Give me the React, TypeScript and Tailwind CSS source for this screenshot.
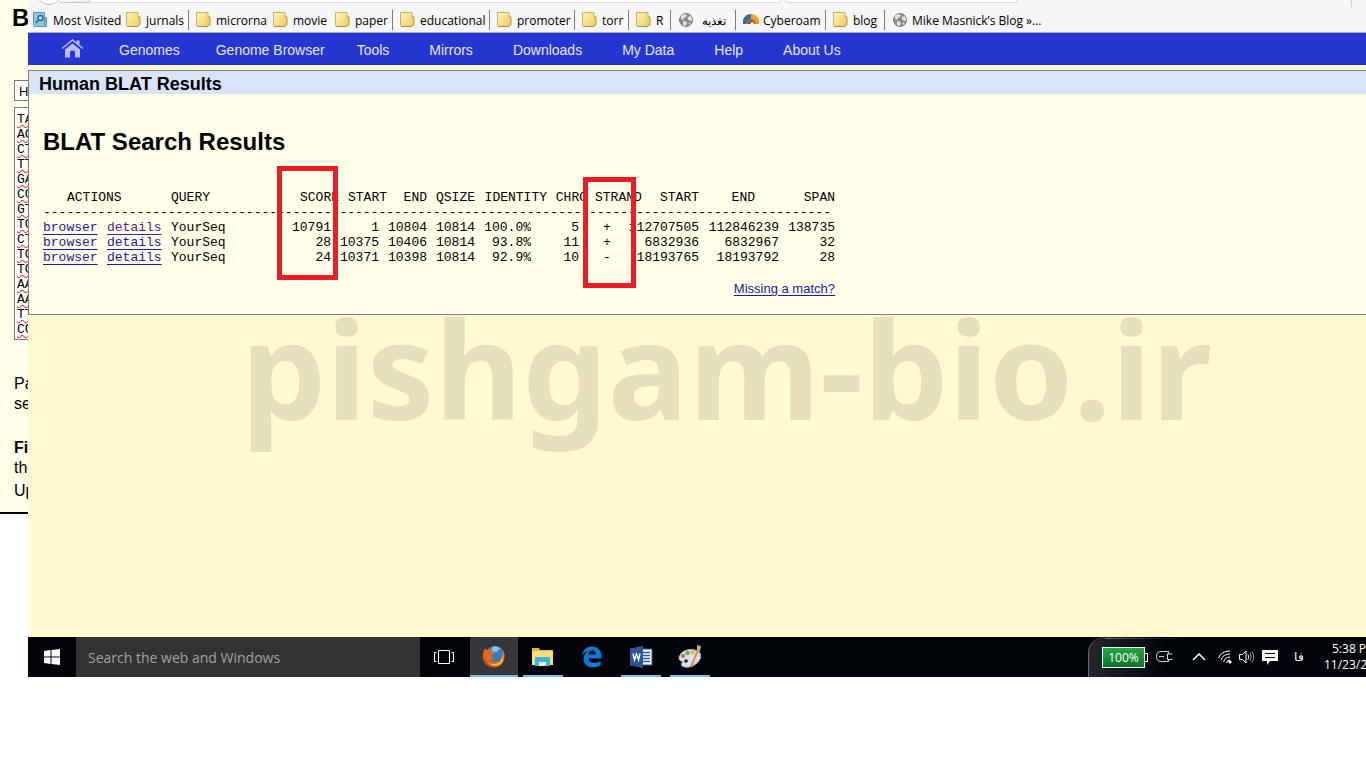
import React from 'react';

const FolderIcon: React.FC = () => (
  <svg className="w-4 h-4 shrink-0" viewBox="0 0 16 16">
    <path d="M11 4.500h2q1 0 1 1V12.500q0 1-1 1H11z" fill="#e6cc68" stroke="#b99b3c" />
    <path d="M.500.500h11.500v14H1.500l-1-1z" fill="url(#folder)" stroke="#cfb255" />
    <path d="M12 5.500v7" stroke="#f7e594" />
    <path d="M1 14.500h11" stroke="#b3923f" />
  </svg>
);

const GlobeIcon: React.FC = () => (
  <svg className="w-4 h-4 shrink-0" viewBox="0 0 16 16">
    <circle cx="8" cy="8" r="6.500" fill="#8a8a8a" stroke="#7f7f7f" />
    <path d="M3 4l3-2 3 1-1 2-2 1-1 2-2-1zM10 5l3-1 1.500 4-2 1-2-1-1-2zM5 9l3 .5 1 2-2 3-2-2zM10.500 11l2-1-1 3z" fill="#e3e3e3" />
  </svg>
);

const SearchFolderIcon: React.FC = () => (
  <svg className="w-4 h-4 shrink-0" viewBox="0 0 16 16">
    <path d="M11 5.500h2.500v9h-2.500z" fill="#7db7d8" stroke="#5b9cc0" />
    <path d="M.5.5h11v14H1.500l-1-1z" fill="#93c5e3" stroke="#5b9cc0" />
    <circle cx="7.500" cy="6" r="2.500" fill="#c3e2f4" stroke="#2d6a90" strokeWidth="1.500" />
    <path d="M5.500 8L3 11" stroke="#2d6a90" strokeWidth="1.800" />
  </svg>
);

const CyberoamIcon: React.FC = () => (
  <svg className="w-4 h-4 shrink-0" viewBox="0 0 16 16">
    <path d="M0 12A8 8 0 018 2v10z" fill="#2f6fae" />
    <path d="M8 2a8 8 0 018 10H8z" fill="#f0a228" />
    <path d="M3 12a5 5 0 0110 0z" fill="#d9641f" />
    <path d="M5 12a3 3 0 016 0z" fill="#3d4f8f" />
    <path d="M7 12a2 2 0 014 0z" fill="#f5f5f5" />
  </svg>
);

const bookmarks = [
  { label: 'Most Visited', icon: <SearchFolderIcon />, box: 'w-[93px] gap-1' },
  { label: 'jurnals', icon: <FolderIcon />, box: 'w-[63px] gap-1 border-r' },
  { label: 'microrna', icon: <FolderIcon />, box: 'w-[77px] gap-1 ml-[7px]' },
  { label: 'movie', icon: <FolderIcon />, box: 'w-[62px] gap-1' },
  { label: 'paper', icon: <FolderIcon />, box: 'w-[58px] gap-1 border-r' },
  { label: 'educational', icon: <FolderIcon />, box: 'w-[90px] gap-1 ml-[7px] border-r' },
  { label: 'promoter', icon: <FolderIcon />, box: 'w-[78px] gap-1 ml-[7px] border-r' },
  { label: 'torr', icon: <FolderIcon />, box: 'w-[47px] gap-1 ml-[7px] border-r' },
  { label: 'R', icon: <FolderIcon />, box: 'w-[35px] gap-1 ml-[7px] border-r' },
  { label: 'تغذیه', icon: <GlobeIcon />, box: 'w-[58px] gap-2 ml-[7px] border-r' },
  { label: 'Cyberoam', icon: <CyberoamIcon />, box: 'w-[83px] gap-1 ml-[7px] border-r' },
  { label: 'blog', icon: <FolderIcon />, box: 'w-[52px] gap-1 ml-[7px] border-r' },
  { label: 'Mike Masnick’s Blog »…', icon: <GlobeIcon />, box: 'gap-1 ml-[7px]' },
];

const menu = [
  { label: 'Genomes', gap: 'mr-9' },
  { label: 'Genome Browser', gap: 'mr-8' },
  { label: 'Tools', gap: 'mr-10' },
  { label: 'Mirrors', gap: 'mr-10' },
  { label: 'Downloads', gap: 'mr-10' },
  { label: 'My Data', gap: 'mr-10' },
  { label: 'Help', gap: 'mr-10' },
  { label: 'About Us', gap: '' },
];

const sequence = ['TA', 'AG', 'CT', 'TT', 'GA', 'CC', 'GT', 'TG', 'CT', 'TG', 'TG', 'AA', 'AA', 'TT', 'CC'];

const hits = [
  { score: '10791', start: '1', end: '10804', identity: '100.0%', chro: '5', strand: '+', tStart: '112707505', tEnd: '112846239', span: '138735', visited: true },
  { score: '28', start: '10375', end: '10406', identity: '93.8%', chro: '11', strand: '+', tStart: '6832936', tEnd: '6832967', span: '32', visited: false },
  { score: '24', start: '10371', end: '10398', identity: '92.9%', chro: '10', strand: '-', tStart: '18193765', tEnd: '18193792', span: '28', visited: false },
];

const BackPage: React.FC = () => (
  <aside className="w-7 h-[514px] shrink-0 overflow-hidden whitespace-nowrap bg-[#fffee8] border-b-2 border-black text-black">
    <h2 className="pl-3 pt-1 text-2xl leading-7 font-bold">BL</h2>
    <div className="ml-[14px] mt-12 w-20 h-[21px] border border-[#7a7a7a] bg-white pl-1 text-[13px] leading-[22px]">Hu</div>
    <div className="ml-[14px] mt-[6px] w-20 h-[233px] border border-[#7a7a7a] bg-white pl-[2px] pt-1 font-['Liberation_Mono',monospace] text-[13px] leading-[15px]">
      {sequence.map((line, index) => (
        <div key={index} className="underline decoration-wavy decoration-[#ff0000] decoration-1 underline-offset-1 [text-decoration-skip-ink:none]">{line}</div>
      ))}
    </div>
    <div className="pl-[14px] pt-[34px] text-base leading-5">
      <p>Pa</p>
      <p>se</p>
      <p className="pt-6 font-bold">Fil</p>
      <p>the</p>
      <p className="pt-[3px]">Up</p>
    </div>
  </aside>
);

const BookmarkBar: React.FC = () => (
  <div className="relative h-[33px] bg-[#f5f5f5] border-b border-[#b5b5b5] pt-[10px] overflow-hidden">
    <svg width="0" height="0" className="absolute">
      <linearGradient id="folder" x1="0" y1="0" x2="1" y2="1">
        <stop offset="0" stopColor="#fff6bd" />
        <stop offset="1" stopColor="#ebcf65" />
      </linearGradient>
    </svg>
    <svg className="absolute left-0 top-0 w-full h-[9px]">
      <path d="M32 2.500H61.500V0" fill="#eeeeee" stroke="#c6c6c6" />
      <path d="M62 0h690v2H62zM758 0h230v2H758z" fill="#ffffff" />
      <path d="M62 2.500h690V0M758.500 0v2.500H988.500V0" fill="none" stroke="#dedede" />
      <circle cx="21" cy="-9" r="13.500" fill="#fafafa" stroke="#c2c2c2" />
      <path d="M1323.500 0v7" stroke="#cfcfcf" />
    </svg>
    <nav className="flex pl-[5px] h-5 whitespace-nowrap font-['Open_Sans','Noto_Sans',sans-serif] text-[12px] leading-5 text-black">
      {bookmarks.map((bookmark) => (
        <a key={bookmark.label} href="#" className={`flex shrink-0 items-center border-[#7d7d7d] ${bookmark.box}`}>
          {bookmark.icon}
          <span className="pt-[2px]">{bookmark.label}</span>
        </a>
      ))}
    </nav>
  </div>
);

const MenuBar: React.FC = () => (
  <nav className="flex h-8 items-center bg-[#2636d0] pl-[31px] pt-[2px] text-[14px] text-[#e4e8ff]">
    <a href="#" aria-label="Home" className="mr-8 px-[2px] pb-[2px]">
      <svg className="w-6 h-5" viewBox="0 0 24 20">
        <path d="M1 9.500L11.500 1 22 9.500" fill="none" stroke="#b9c0f5" strokeWidth="1.500" />
        <path d="M15.500 1.500h3V6l-3-2.500z" fill="#b9c0f5" />
        <path d="M4 10.500L11.500 4.500l7.500 6v8h-5V13q0-1.500-2.500-1.500T9 13v5.500H4z" fill="#b9c0f5" />
      </svg>
    </a>
    {menu.map((item) => (
      <a key={item.label} href="#" className={item.gap}>{item.label}</a>
    ))}
  </nav>
);

const Results: React.FC = () => (
  <div className="relative w-[792px] mt-8">
    <table className="table-fixed w-full font-['Liberation_Mono',monospace] text-[13px] leading-[15px] text-right whitespace-nowrap text-black">
      <colgroup>
        <col className="w-[128px]" />
        <col className="w-[104px]" />
        <col className="w-[64px]" />
        <col className="w-[48px]" />
        <col className="w-[48px]" />
        <col className="w-[48px]" />
        <col className="w-[72px]" />
        <col className="w-[40px]" />
        <col className="w-[32px]" />
        <col className="w-[80px]" />
        <col className="w-[80px]" />
        <col className="w-[48px]" />
      </colgroup>
      <thead>
        <tr className="[&>th]:font-normal">
          <th className="pl-6 text-left">ACTIONS</th>
          <th className="text-left">QUERY</th>
          <th>SCORE</th>
          <th>START</th>
          <th className="pr-2">END</th>
          <th className="pr-2">QSIZE</th>
          <th className="pr-2">IDENTITY</th>
          <th className="pr-2">CHRO</th>
          <th className="text-left">STRAND</th>
          <th className="pr-2">START</th>
          <th className="pr-8">END</th>
          <th>SPAN</th>
        </tr>
        <tr>
          <td colSpan={12} className="text-left">{'-'.repeat(101)}</td>
        </tr>
      </thead>
      <tbody>
        {hits.map((hit) => (
          <tr key={hit.score}>
            <td className="text-left text-[#1a1a9c]">
              <a href="#" className="inline-block w-16 underline underline-offset-3">browser</a>
              <a href="#" className={hit.visited ? 'underline underline-offset-3 text-[#551a8b]' : 'underline underline-offset-3'}>details</a>
            </td>
            <td className="text-left">YourSeq</td>
            <td className="pr-2">{hit.score}</td>
            <td className="pr-2">{hit.start}</td>
            <td className="pr-2">{hit.end}</td>
            <td className="pr-2">10814</td>
            <td className="pr-6">{hit.identity}</td>
            <td className="pr-4">{hit.chro}</td>
            <td className="pl-2 text-left">{hit.strand}</td>
            <td className="pr-2">{hit.tStart}</td>
            <td className="pr-2">{hit.tEnd}</td>
            <td>{hit.span}</td>
          </tr>
        ))}
      </tbody>
    </table>
    <div className="mt-4 text-right text-[13px] leading-4">
      <a href="#" className="underline underline-offset-2 text-[#1a1a9c]">Missing a match?</a>
    </div>
    {/* Highlight frames over the score and strand columns */}
    <div className="absolute left-[234px] -top-6 w-[61px] h-[114px] border-5 border-[#ed1c24]"></div>
    <div className="absolute left-[540px] -top-[13px] w-[53px] h-[111px] border-5 border-[#ed1c24]"></div>
  </div>
);

const FirefoxIcon: React.FC = () => (
  <svg className="w-6 h-6" viewBox="0 0 24 24">
    <circle cx="13" cy="10.500" r="9.500" fill="#2b7fc4" />
    <path d="M10 2q5-2 9 2-3 0-4 3-3-1-5 1z" fill="#7cc3ec" />
    <path d="M3 3q-3 6-2 11 2 8 11 8.500 9-.5 10.500-10 .5-5-3-8.500 2 4 .5 7-2 6-8 6-4-1-4.500-3 3 1.500 5-.5-2-.5-2.500-2.500 0-2 3-2.500 0-1.500-3-2Q8 4 9.500 3 6.500 3 5.500 5 4 5 3 3z" fill="#e5691c" />
    <path d="M21 7q1 7-4 10.500t-11 0q5 5 11 2.500 6-4 4-13z" fill="#f9c33c" />
    <path d="M2 9q0 6 4 10 5 4 11 2-8 3-13-2Q1 15 2 9z" fill="#c93b23" />
  </svg>
);

const ExplorerIcon: React.FC = () => (
  <svg className="w-6 h-6" viewBox="0 0 24 24">
    <path d="M1 3h7l1 2h13v4H1z" fill="#e8b63c" />
    <path d="M1 6h21v14H1z" fill="#fddc78" />
    <path d="M4 13q0-1 1-1h13q1 0 1 1v8h-4v-4H8v4H4z" fill="#35b5ee" />
    <path d="M8 17h7v4H8z" fill="#fff1bd" />
  </svg>
);

const EdgeIcon: React.FC = () => (
  <svg className="w-6 h-6" viewBox="0 0 24 24">
    <path d="M2 10.500C3 4.500 7 1.500 12 1.500c6 0 9.500 4.500 9.500 9.500v2.500H8.500c.3 3 2.500 4.300 5.500 4.300 2.500 0 4.500-.6 6.500-1.800v4.500c-2 1.200-4.500 1.800-7.500 1.800-6 0-9.500-3.500-9.500-8.300 0-3.500 2-6.300 5-7.700-3 .3-5 1.700-6.500 4.200zM8.500 9.500h7.300c0-2.500-1.300-4-3.500-4s-3.500 1.500-3.800 4z" fill="#0b78d8" />
  </svg>
);

const WordIcon: React.FC = () => (
  <svg className="w-6 h-6" viewBox="0 0 24 24">
    <path d="M12 4h11v16H12z" fill="#ffffff" stroke="#2b579a" />
    <path d="M13 7.500h8M13 10.500h8M13 13.500h8M13 16.500h8" stroke="#2b579a" strokeWidth="1.500" />
    <path d="M1 3.500L14 1v22L1 20.500z" fill="#2b579a" />
    <path d="M4 8.500l1.500 6.500 2-6 2 6 1.500-6.500" fill="none" stroke="#ffffff" strokeWidth="1.400" />
  </svg>
);

const PaintIcon: React.FC = () => (
  <svg className="w-6 h-6" viewBox="0 0 24 24">
    <path d="M1 13Q2 7 9 5t13 3q2 5-2 9-6 6-13 5-5-1-3-4 2-2-1-2-2-1-2-3z" fill="#d3e2ee" stroke="#a9bfd0" />
    <circle cx="5" cy="11" r="2" fill="#e05b33" />
    <circle cx="9.500" cy="8" r="2.200" fill="#62b24b" />
    <circle cx="14.500" cy="7.500" r="2" fill="#efb92c" />
    <circle cx="8" cy="16" r="1.800" fill="#15181d" />
    <path d="M20 5L13 22" stroke="#e0903f" strokeWidth="2" />
    <path d="M19 .5q3-1 4 1.500L21.500 7 19 6z" fill="#c9a98a" />
  </svg>
);

const apps = [
  { name: 'Firefox', icon: <FirefoxIcon />, style: 'w-12 bg-[#35373a] border-[#76b9ed]' },
  { name: 'File Explorer', icon: <ExplorerIcon />, style: 'w-10 ml-[5px] border-[#76b9ed]' },
  { name: 'Edge', icon: <EdgeIcon />, style: 'w-10 ml-[9px] border-transparent' },
  { name: 'Word', icon: <WordIcon />, style: 'w-10 ml-[9px] border-[#76b9ed]' },
  { name: 'Paint', icon: <PaintIcon />, style: 'w-10 ml-[9px] border-[#76b9ed]' },
];

const Taskbar: React.FC = () => (
  <footer className="flex h-10 bg-[#010409] overflow-hidden font-['Open_Sans','Noto_Sans',sans-serif] text-white">
    <button aria-label="Start" className="w-12 shrink-0 flex items-center justify-center">
      <svg className="w-4 h-4" viewBox="0 0 16 16" fill="#ffffff">
        <path d="M0 2l6.500-1v6.500H0zM7.500.900L16 0v7.500H7.500zM0 8.500h6.500V15L0 14zM7.500 8.500H16V16l-8.500-1z" />
      </svg>
    </button>
    <input
      type="text"
      aria-label="Search the web and Windows"
      placeholder="Search the web and Windows"
      className="w-[344px] shrink-0 bg-[#333333] px-3 text-[14px] placeholder:text-[#a0a0a0] outline-none"
    />
    <button aria-label="Task view" className="w-[50px] shrink-0 flex items-center justify-center pr-[2px]">
      <svg className="w-5 h-4" viewBox="0 0 20 16" fill="none" stroke="#ffffff">
        <path d="M4.500 1.500h11v13h-11zM2.500 3.500h-2v9h2M17.500 3.500h2v9h-2" />
      </svg>
    </button>
    {apps.map((app) => (
      <button key={app.name} aria-label={app.name} className={`flex shrink-0 items-center justify-center pt-[2px] border-b-2 ${app.style}`}>
        {app.icon}
      </button>
    ))}
    <div className="relative ml-auto flex shrink-0 items-center border-l border-[#6b6d70] rounded-tl-2xl bg-linear-to-r from-[#25272b] to-[#010409] to-30% h-10 pl-[13px]">
      <div className="absolute left-4 top-[1px] w-20 h-px bg-linear-to-r from-[#6b6d70] to-[#010409]"></div>
      <div className="w-[43px] h-[21px] border border-white bg-linear-to-b from-[#28a745] to-[#08752a] text-[12px] leading-[19px] text-center">100%</div>
      <div className="w-[3px] h-[9px] border border-l-0 border-white"></div>
      <svg className="w-[17px] h-3 ml-2" viewBox="0 0 17 12" fill="none" stroke="#d0d0d0">
        <path d="M12.500.5H5Q.5.5.5 5.500t4.500 5h7.500M11.500 2.500V9M11.500 3h5M11.500 8.500h5M3 5.500h5M12.500.5V3M12.500 10.500V8" />
      </svg>
      <svg className="w-[14px] h-2 ml-[19px]" viewBox="0 0 14 8" fill="none" stroke="#ffffff" strokeWidth="1.500">
        <path d="M1 7l6-6 6 6" />
      </svg>
      <svg className="w-[14px] h-[14px] ml-3" viewBox="0 0 14 14" fill="none" stroke="#ffffff">
        <path d="M.5 8Q3 1 12 1M3 10Q5 4 12 4M5.500 12Q7 7 12 7M8.500 13Q9 10 12 10" />
        <path d="M11 11h2v2h-2z" fill="#ffffff" />
      </svg>
      <svg className="w-4 h-[14px] ml-[7px]" viewBox="0 0 16 14" fill="none" stroke="#ffffff">
        <path d="M.5 4.500h3L7 1v12L3.500 9.500h-3z" />
        <path d="M9 4.500q1.500 2.500 0 5" />
        <path d="M11 3q2.500 4 0 8M13 1.500q3.500 5.500 0 11" stroke="#9a9a9a" />
      </svg>
      <svg className="w-4 h-4 ml-[7px]" viewBox="0 0 16 16">
        <path d="M0 1h16v11H8l-3 4v-4H0z" fill="#ffffff" />
        <path d="M3 4.500h10M3 8.500h10" stroke="#010409" />
      </svg>
      <span className="ml-4 w-2 text-[12px]">فا</span>
      <div className="ml-[22px] w-[42px] text-[12px] leading-4 text-left whitespace-nowrap">
        <div className="pl-2">5:38 PM</div>
        <div>11/23/2015</div>
      </div>
    </div>
  </footer>
);

const App: React.FC = () => {
  return (
    <div className="flex min-h-screen items-start overflow-hidden bg-white font-['Liberation_Sans',Arial,sans-serif]">
      <BackPage />
      <main className="flex-1 min-w-0 bg-[#fff8d0]">
        <BookmarkBar />
        <MenuBar />
        <section className="mt-[5px] h-[245px] bg-[#fffee8] border border-r-0 border-[#808080] text-black">
          <h1 className="h-[23px] bg-[#d9e4f8] pl-[10px] text-lg leading-[26px] font-bold">Human BLAT Results</h1>
          <div className="pl-[14px] pt-8">
            <h2 className="text-2xl leading-8 font-bold">BLAT Search Results</h2>
            <Results />
          </div>
        </section>
        <div className="h-[322px] overflow-hidden pl-[213px] font-['Noto_Sans',sans-serif] text-[135px] leading-[106px] font-bold text-[#e6dfbc] whitespace-nowrap select-none">
          pishgam-bio.ir
        </div>
        <Taskbar />
      </main>
    </div>
  );
};

export default App;
